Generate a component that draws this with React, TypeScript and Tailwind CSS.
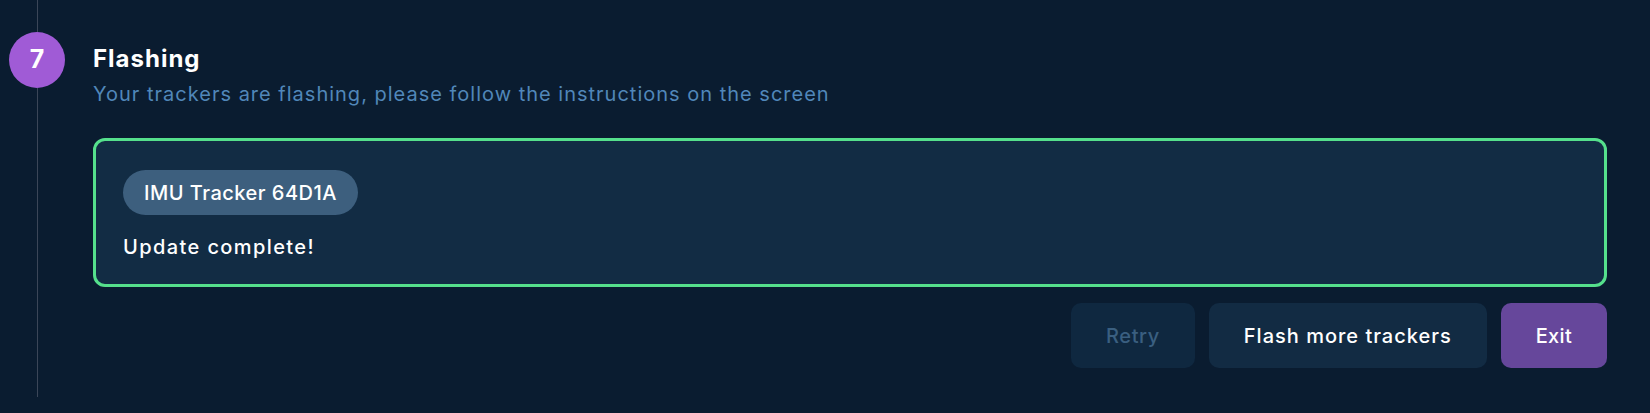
export default function App() {
  const font = { fontFamily: 'Inter, "Noto Sans", sans-serif' };

  return (
    <div className="min-h-screen bg-[#0a1c30] flex pl-[9px] pb-[16px]" style={font}>
      <div className="flex flex-col items-center w-[56px] shrink-0">
        <div className="h-[32px] w-px bg-[#3b4658]" />
        <div className="w-[56px] h-[56px] rounded-full bg-[#a05bd6] flex items-center justify-center text-white text-[25px] font-bold">
          7
        </div>
        <div className="flex-1 w-px bg-[#3b4658]" />
      </div>

      <div className="flex-1 ml-[28px] mr-[43px] pt-[43px] pb-[29px] flex flex-col">
        <h2 className="text-[24px] leading-[32px] font-bold tracking-[1px] text-white">Flashing</h2>
        <p className="mt-[5px] text-[20px] leading-[28px] tracking-[1px] text-[#5187b9]">
          Your trackers are flashing, please follow the instructions on the screen
        </p>

        <div className="mt-[30px] border-[3px] border-[#55e08c] rounded-[12px] bg-[#122c44] px-[27px] pt-[29px] pb-[23px] flex flex-col">
          <span className="self-start h-[45px] px-[21px] flex items-center rounded-full bg-[#3d5f7e] text-white text-[20px] font-medium tracking-[0.5px]">
            IMU Tracker 64D1A
          </span>
          <p className="mt-[18px] text-[20px] leading-[28px] font-medium tracking-[1.4px] text-white">Update complete!</p>
        </div>

        <div className="mt-[16px] flex justify-end gap-[14px]">
          <button disabled className="h-[65px] px-[35px] rounded-[10px] bg-[#0f2840] text-[#3a5f80] text-[20px] font-medium tracking-[0.6px]">
            Retry
          </button>
          <button className="h-[65px] px-[35px] rounded-[10px] bg-[#122b43] text-white text-[20px] font-medium tracking-[1px]">
            Flash more trackers
          </button>
          <button className="h-[65px] px-[35px] rounded-[10px] bg-[#66479b] text-white text-[20px] font-medium tracking-[0.3px]">
            Exit
          </button>
        </div>
      </div>
    </div>
  );
}
